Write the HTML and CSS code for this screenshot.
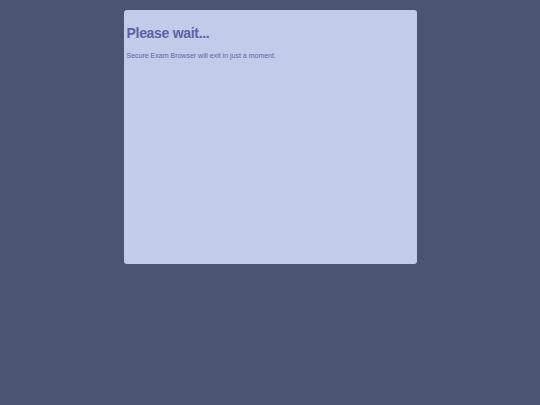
FILE: index.html
```html
<!DOCTYPE html>
<html>
<head>
<meta charset="utf-8">
<link rel="stylesheet" href="styles.css">
</head>
<body>
<div class="card">
  <h1 class="title">Please wait...</h1>
  <p class="msg">Secure Exam Browser will exit in just a moment.</p>
</div>
</body>
</html>
```
FILE: styles.css
```css
html, body {
  margin: 0;
  padding: 0;
  background: #4b5573;
  height: 100%;
}
body {
  display: flex;
  justify-content: center;
  align-items: flex-start;
  padding-top: 10px;
  box-sizing: border-box;
  font-family: "Comic Sans MS", "Liberation Sans", sans-serif;
  color: #5b63a6;
}
.card {
  width: 293px;
  height: 254px;
  background: #c3cbea;
  border-radius: 3px;
  box-sizing: border-box;
  padding: 15px 3px;
}
.title {
  margin: 0;
  font-size: 14px;
  font-weight: bold;
  line-height: 16px;
  letter-spacing: -0.3px;
}
.msg {
  margin: 10px 0 0;
  font-size: 7px;
  line-height: 9px;
}
```
